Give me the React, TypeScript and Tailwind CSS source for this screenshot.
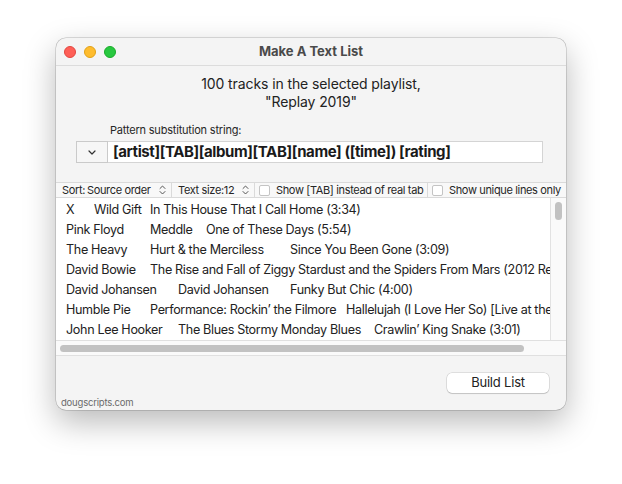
const font = { fontFamily: "Inter, 'Noto Sans', sans-serif" };

type Cell = [string, number];

// each cell: text, tab stop index (28px stops from the left padding)
const rows: Cell[][] = [
  [["X", 0], ["Wild Gift", 1], ["In This House That I Call Home (3:34)", 3]],
  [["Pink Floyd", 0], ["Meddle", 3], ["One of These Days (5:54)", 5]],
  [["The Heavy", 0], ["Hurt & the Merciless", 3], ["Since You Been Gone (3:09)", 8]],
  [["David Bowie", 0], ["The Rise and Fall of Ziggy Stardust and the Spiders From Mars (2012 Remaster) (0:54)", 3]],
  [["David Johansen", 0], ["David Johansen", 4], ["Funky But Chic (4:00)", 8]],
  [["Humble Pie", 0], ["Performance: Rockin\u2019 the Filmore", 3], ["Hallelujah (I Love Her So) [Live at the Fillmore East] (5:12)", 10]],
  [["John Lee Hooker", 0], ["The Blues Stormy Monday Blues", 4], ["Crawlin\u2019 King Snake (3:01)", 11]],
];

const UpDown = () => (
  <svg width="7" height="10" viewBox="0 0 7 10" className="shrink-0">
    <path d="M1 3.5 3.5 1 6 3.5M1 6.5 3.5 9 6 6.5" fill="none" stroke="#555" strokeWidth="1" strokeLinecap="round" strokeLinejoin="round" />
  </svg>
);

const Check = () => <div className="w-[11px] h-[11px] rounded-[2px] border border-[#c4c4c4] bg-white shrink-0" />;

export default function App() {
  return (
    <div className="w-[622px] h-[484px] bg-white pt-[38px] pl-[56px]" style={font}>
      <div className="w-[510px] h-[372px] rounded-[10px] bg-[#f4f4f4] overflow-hidden flex flex-col shadow-[0_0_0_0.5px_rgba(0,0,0,0.25),0_12px_32px_rgba(0,0,0,0.28)]">
        {/* title bar */}
        <div className="h-[28px] shrink-0 border-b border-[#dcdcdc] grid grid-cols-[1fr_auto_1fr] items-center">
          <div className="flex gap-[8px] pl-[8px]">
            <div className="w-[12px] h-[12px] rounded-full bg-[#fe5f57] border border-[#e2463f]" />
            <div className="w-[12px] h-[12px] rounded-full bg-[#febc2e] border border-[#e1a116]" />
            <div className="w-[12px] h-[12px] rounded-full bg-[#28c840] border border-[#1aab29]" />
          </div>
          <div className="text-[13px] font-bold text-[#4a4a4a]">Make A Text List</div>
          <div />
        </div>

        {/* header */}
        <div className="mt-[9px] text-center text-[14px] leading-[18px] text-[#222] tracking-[-0.1px]">
          <div>100 tracks in the selected playlist,</div>
          <div>"Replay 2019"</div>
        </div>

        <div className="mt-[12px] pl-[54px] text-[11px] leading-[14px] text-[#262626] tracking-[-0.2px]">Pattern substitution string:</div>

        <div className="mt-[4px] ml-[20px] w-[467px] h-[22px] flex">
          <div className="w-[32px] h-full border border-[#cacaca] bg-[#f6f6f6] flex items-center justify-center">
            <svg width="8" height="5" viewBox="0 0 8 5">
              <path d="M1 1 4 4 7 1" fill="none" stroke="#333" strokeWidth="1.2" strokeLinecap="round" strokeLinejoin="round" />
            </svg>
          </div>
          <div className="flex-1 h-full border border-l-0 border-[#d4d4d4] bg-white flex items-center pl-[5px] text-[15px] font-bold text-[#1a1a1a] whitespace-nowrap tracking-[-0.4px]">
            [artist][TAB][album][TAB][name] ([time]) [rating]
          </div>
        </div>

        {/* options bar */}
        <div className="mt-[19px] h-[16px] border-y border-[#dadada] bg-[#f8f8f8] flex text-[11px] text-[#262626] whitespace-nowrap tracking-[-0.35px]">
          <div className="w-[116px] border-r border-[#dadada] flex items-center pl-[6px] pr-[5px]">
            <span>Sort:</span>
            <span className="ml-[2px] flex-1">Source order</span>
            <UpDown />
          </div>
          <div className="w-[83px] border-r border-[#dadada] flex items-center pl-[6px] pr-[5px]">
            <span className="flex-1">Text size:12</span>
            <UpDown />
          </div>
          <div className="w-[173px] border-r border-[#dadada] flex items-center gap-[6px] pl-[4px]">
            <Check />
            <span>Show [TAB] instead of real tab</span>
          </div>
          <div className="flex-1 flex items-center gap-[6px] pl-[4px]">
            <Check />
            <span>Show unique lines only</span>
          </div>
        </div>

        {/* list */}
        <div className="h-[142px] flex bg-white">
          <div className="w-[495px] overflow-hidden pt-[2px] pl-[10px] text-[12.6px] text-[#222] border-r border-[#e2e2e2] tracking-[-0.35px]">
            {rows.map((row, i) => (
              <div key={i} className="h-[20px] flex items-center whitespace-nowrap">
                {row.map(([text, stop], j) => {
                  const next = row[j + 1];
                  return (
                    <span
                      key={j}
                      className="inline-block shrink-0"
                      style={next ? { width: (next[1] - stop) * 28 } : undefined}
                    >
                      {text}
                    </span>
                  );
                })}
              </div>
            ))}
          </div>
          <div className="flex-1 bg-[#fafafa] pt-[4px] flex justify-center">
            <div className="w-[7px] h-[18px] rounded-full bg-[#c2c2c2]" />
          </div>
        </div>
        <div className="h-[16px] border-t border-b border-[#e0e0e0] bg-[#fafafa] flex items-center pl-[4px]">
          <div className="w-[464px] h-[7px] rounded-full bg-[#c2c2c2]" />
        </div>

        {/* footer */}
        <div className="flex-1 flex flex-col">
          <div className="mt-[17px] flex justify-end pr-[17px]">
            <button className="w-[102px] h-[20px] rounded-[5px] bg-white text-[13px] text-[#222] tracking-[-0.2px] shadow-[0_0_0_0.5px_rgba(0,0,0,0.18),0_1px_1px_rgba(0,0,0,0.12)]">
              Build List
            </button>
          </div>
          <div className="mt-auto mb-[1px] pl-[5px] text-[9.5px] leading-[12px] text-[#6a6a6a] tracking-[-0.2px]">dougscripts.com</div>
        </div>
      </div>
    </div>
  );
}
